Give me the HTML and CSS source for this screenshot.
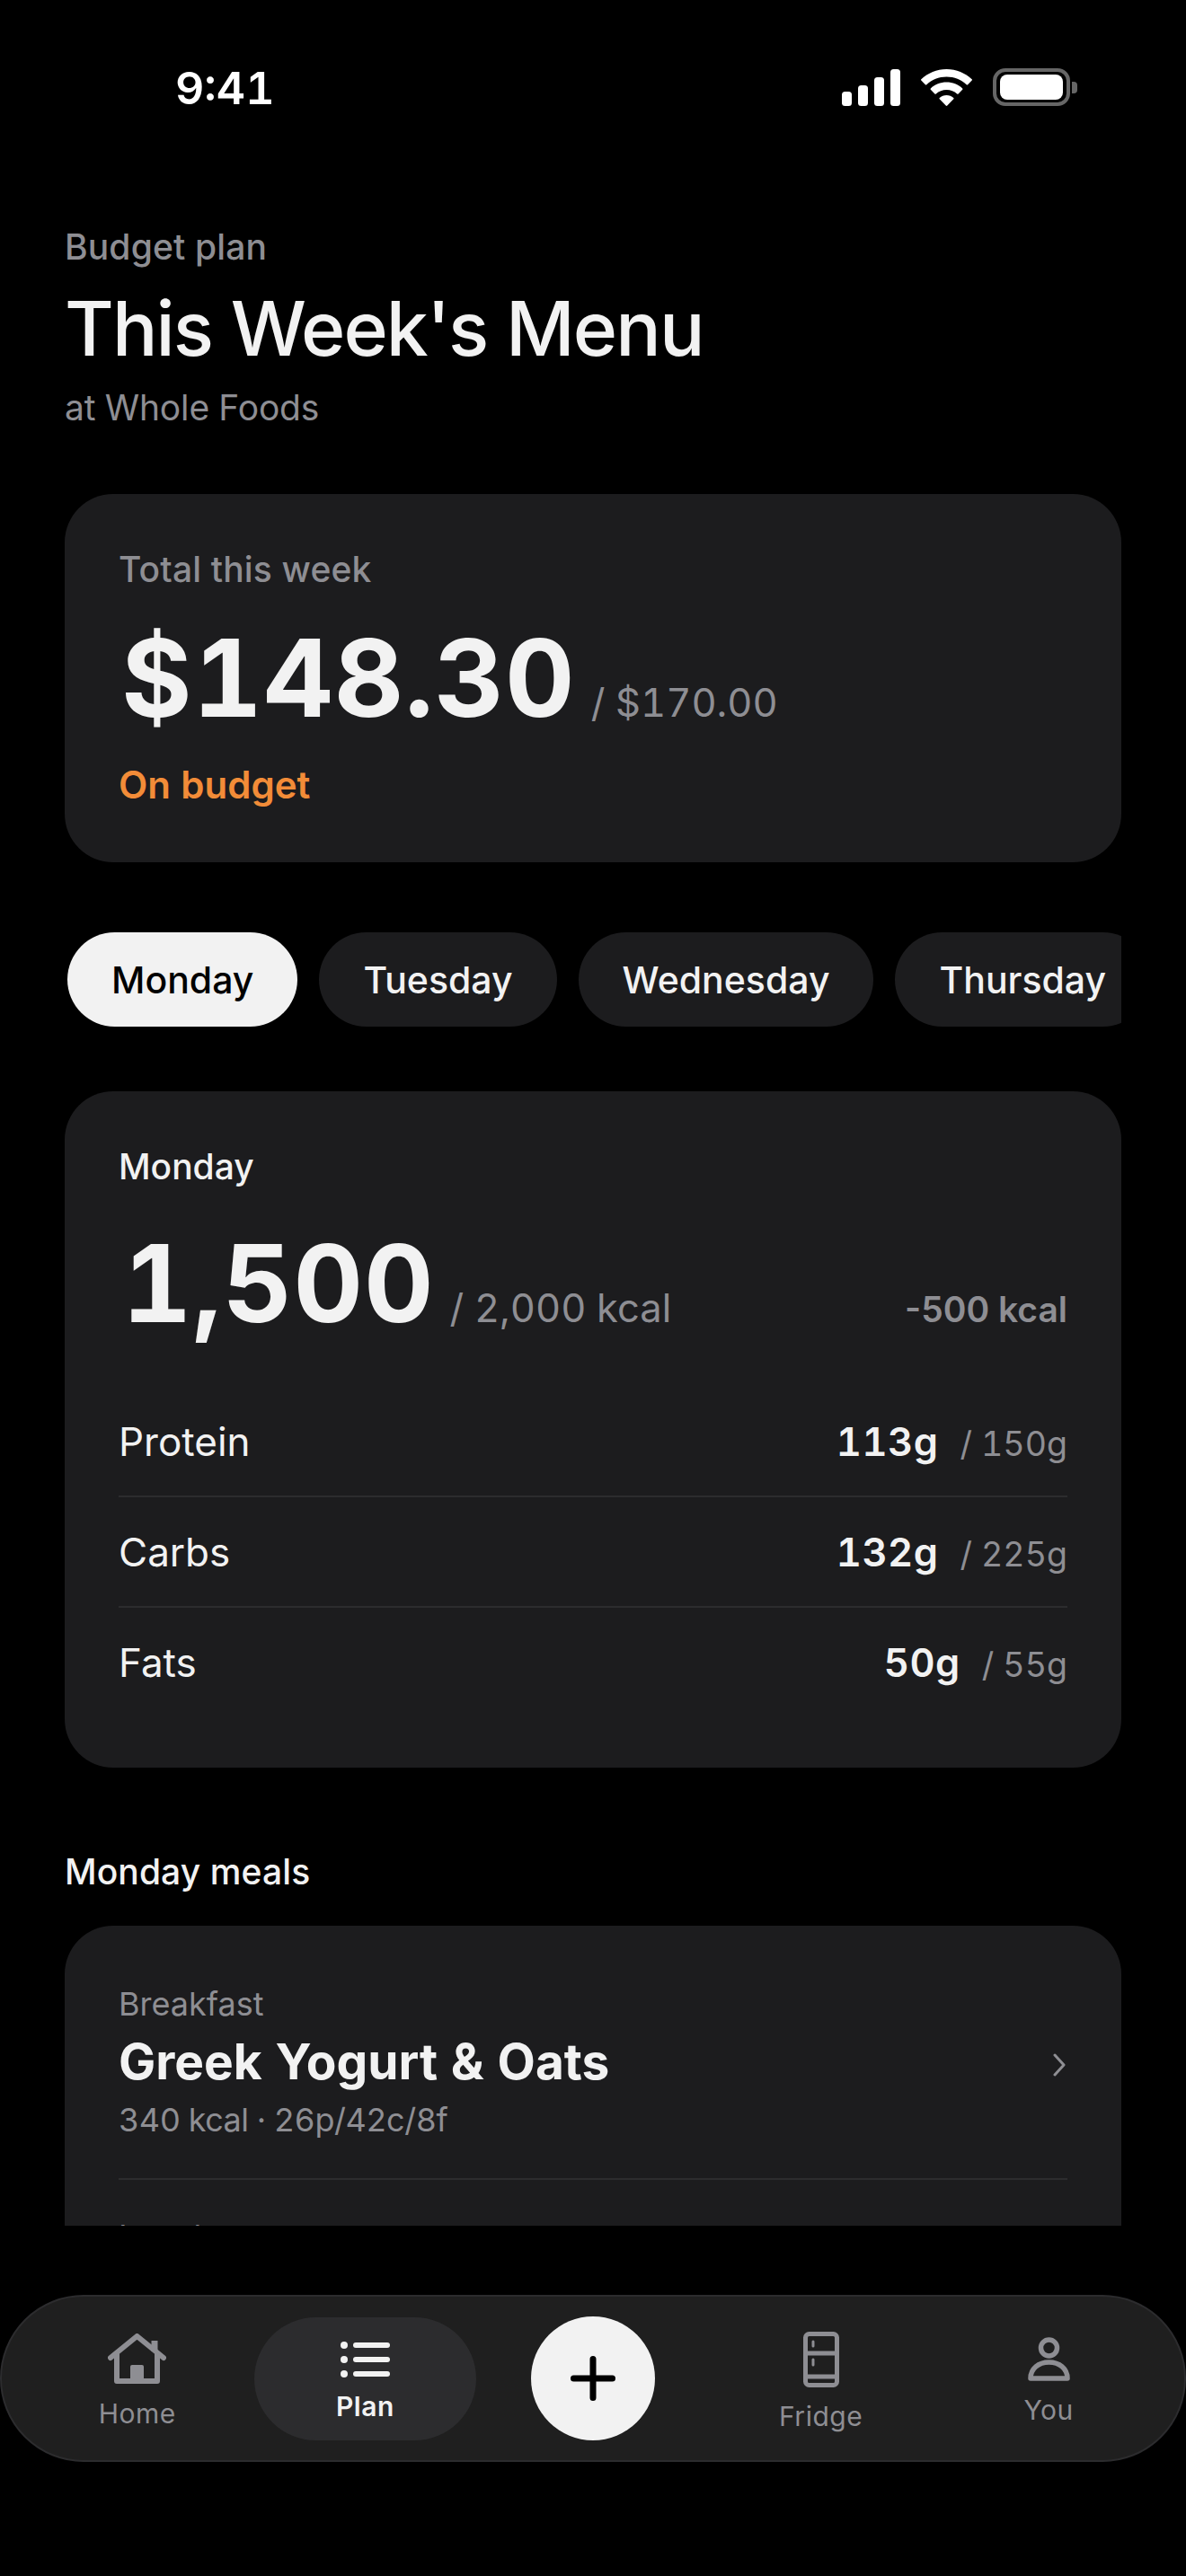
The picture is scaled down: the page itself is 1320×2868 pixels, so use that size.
FILE: index.html
```html
<!DOCTYPE html>
<html lang="en">
<head>
    <meta charset="UTF-8">
    <meta name="viewport" content="width=device-width, initial-scale=1.0">
    <title>This Week's Menu</title>
    <link rel="stylesheet" href="styles.css">
</head>
<body>
    <div class="phone">
        <div class="status-bar">
            <span class="time">9:41</span>
            <div class="status-icons">
                <svg class="icon-signal" width="65" height="41" viewBox="0 0 65 41" fill="#fff">
                    <rect x="0" y="25" width="11" height="16" rx="3.5"/>
                    <rect x="18" y="18" width="11" height="23" rx="3.5"/>
                    <rect x="36" y="9" width="11" height="32" rx="3.5"/>
                    <rect x="54" y="0" width="11" height="41" rx="3.5"/>
                </svg>
                <svg class="icon-wifi" width="57" height="41" viewBox="0 0 57 41" fill="#fff">
                    <path d="M28.5 0C17.6 0 7.7 4.3.3 11.3c-.4.4-.4 1 0 1.3l4.6 4.7c.4.4 1 .4 1.4 0C12.1 11.900 19.900 8.600 28.500 8.600s16.400 3.300 22.200 8.700c.4.4 1 .4 1.400 0l4.600-4.700c.4-.3.4-.9 0-1.300C49.300 4.300 39.400 0 28.500 0z"/>
                    <path d="M28.500 14.500c-6.800 0-13 2.600-17.700 6.900-.4.4-.4 1 0 1.400l4.600 4.600c.4.4 1 .4 1.400 0 3.100-2.700 7.200-4.400 11.700-4.400s8.600 1.700 11.700 4.400c.4.4 1 .4 1.400 0l4.600-4.600c.4-.4.4-1 0-1.400-4.700-4.300-10.900-6.900-17.700-6.900z"/>
                    <path d="M28.500 29c-3 0-5.700 1.100-7.800 2.900-.4.400-.4 1 0 1.400l7 7.300c.4.500 1.200.500 1.600 0l7-7.300c.4-.4.4-1 0-1.400-2.100-1.800-4.800-2.900-7.800-2.900z"/>
                </svg>
                <div class="battery">
                    <div class="battery-body"><div class="battery-level"></div></div>
                    <div class="battery-nub"></div>
                </div>
            </div>
        </div>

        <div class="scroll-area">
            <header class="header">
                <div class="eyebrow">Budget plan</div>
                <h1 class="title">This Week's Menu</h1>
                <div class="store">at Whole Foods</div>
            </header>

            <section class="card budget-card">
                <div class="card-label">Total this week</div>
                <div class="budget-row">
                    <span class="big-number">$148.30</span>
                    <span class="big-limit">/ $170.00</span>
                </div>
                <div class="budget-state">On budget</div>
            </section>

            <div class="day-tabs">
                <button class="day-tab active">Monday</button>
                <button class="day-tab">Tuesday</button>
                <button class="day-tab">Wednesday</button>
                <button class="day-tab">Thursday</button>
            </div>

            <section class="card day-card">
                <div class="day-name">Monday</div>
                <div class="kcal-row">
                    <span class="big-number kcal-number">1,500</span>
                    <span class="big-limit">/ 2,000 kcal</span>
                    <span class="kcal-diff">-500 kcal</span>
                </div>
                <div class="macro">
                    <span class="macro-name">Protein</span>
                    <span class="macro-value">113g</span>
                    <span class="macro-goal">/ 150g</span>
                </div>
                <div class="macro">
                    <span class="macro-name">Carbs</span>
                    <span class="macro-value">132g</span>
                    <span class="macro-goal">/ 225g</span>
                </div>
                <div class="macro">
                    <span class="macro-name">Fats</span>
                    <span class="macro-value">50g</span>
                    <span class="macro-goal">/ 55g</span>
                </div>
            </section>

            <h2 class="section-title">Monday meals</h2>

            <section class="card meals-card">
                <div class="meal">
                    <div class="meal-info">
                        <div class="meal-type">Breakfast</div>
                        <div class="meal-name">Greek Yogurt &amp; Oats</div>
                        <div class="meal-meta">340 kcal · 26p/42c/8f</div>
                    </div>
                    <svg class="chevron" width="14" height="26" viewBox="0 0 14 26" fill="none" stroke="#8e8e93" stroke-width="3" stroke-linecap="round" stroke-linejoin="round">
                        <path d="M2 2l10 11L2 24"/>
                    </svg>
                </div>
                <div class="meal">
                    <div class="meal-info">
                        <div class="meal-type">Lunch</div>
                        <div class="meal-name">Chicken Grain Bowl</div>
                        <div class="meal-meta">520 kcal · 42p/48c/16f</div>
                    </div>
                </div>
            </section>
        </div>

        <nav class="tab-bar">
            <a class="tab-item">
                <svg width="65" height="57" viewBox="0 0 65 57" fill="none" stroke="#8e8e93" stroke-width="6" stroke-linecap="round" stroke-linejoin="round">
                    <path d="M3 27L32.500 3 62 27"/>
                    <path d="M10 23v30h45V23"/>
                    <path d="M52 20V8" stroke-width="7" stroke-linecap="butt"/>
                    <rect x="25" y="35" width="15" height="18" rx="2" fill="#8e8e93" stroke="none"/>
                </svg>
                <span class="tab-label">Home</span>
            </a>
            <a class="tab-item current">
                <svg width="55" height="40" viewBox="0 0 55 40" fill="#f2f2f2">
                    <circle cx="4" cy="4" r="4"/>
                    <circle cx="4" cy="20" r="4"/>
                    <circle cx="4" cy="36" r="4"/>
                    <rect x="14" y="1" width="41" height="6" rx="3"/>
                    <rect x="14" y="17" width="41" height="6" rx="3"/>
                    <rect x="14" y="33" width="41" height="6" rx="3"/>
                </svg>
                <span class="tab-label">Plan</span>
            </a>
            <div class="tab-add">
                <button class="add-button">
                    <svg width="50" height="50" viewBox="0 0 50 50" fill="none" stroke="#000" stroke-width="7" stroke-linecap="round">
                        <path d="M25 3.500v43M3.500 25h43"/>
                    </svg>
                </button>
            </div>
            <a class="tab-item">
                <svg width="40" height="62" viewBox="0 0 40 62" fill="none" stroke="#8e8e93" stroke-width="5" stroke-linecap="round">
                    <rect x="2.500" y="2.500" width="35" height="57" rx="4"/>
                    <path d="M2.500 24h35M2.500 50h35" stroke-linecap="butt"/>
                    <path d="M11 11v5M11 31v6" stroke-width="3"/>
                </svg>
                <span class="tab-label">Fridge</span>
            </a>
            <a class="tab-item">
                <svg width="47" height="49" viewBox="0 0 47 49" fill="none" stroke="#8e8e93" stroke-width="5.500" stroke-linejoin="round">
                    <circle cx="23.500" cy="12" r="9"/>
                    <path d="M3 46c0-11 9-18 20.500-18S44 35 44 46z"/>
                </svg>
                <span class="tab-label">You</span>
            </a>
        </nav>
    </div>
</body>
</html>
```

FILE: styles.css
```css
* { box-sizing: border-box; }
html, body { margin: 0; padding: 0; background: #000; }
body { font-family: Inter, "Liberation Sans", sans-serif; font-variant-numeric: tabular-nums; color: #f2f2f2; }

.phone { width: 1320px; height: 2868px; background: #000; display: flex; flex-direction: column; overflow: hidden; }

/* status bar */
.status-bar { height: 195px; flex: none; display: flex; justify-content: space-between; align-items: flex-start; padding: 70px 121px 0 195px; }
.time { font-size: 50px; font-weight: 600; line-height: 56px; color: #fff; }
.status-icons { display: flex; align-items: center; gap: 23px; padding-top: 6px; }
.battery { display: flex; align-items: center; gap: 2px; }
.battery-body { width: 86px; height: 42px; border: 4px solid #666; border-radius: 14px; padding: 3px 4px; }
.battery-level { width: 100%; height: 100%; background: #fff; border-radius: 8px; }
.battery-nub { width: 6px; height: 13px; background: #666; border-radius: 0 4px 4px 0; }

/* scrolling content, cut off above the tab bar */
.scroll-area { height: 2283px; flex: none; padding: 56px 72px 0; overflow: hidden; }

.header { margin-bottom: 72px; }
.eyebrow { font-size: 39px; font-weight: 550; line-height: 48px; letter-spacing: 0.150px; color: #8e8e93; }
.title { margin: 17px 0 0; font-size: 84px; font-weight: 500; line-height: 100px; letter-spacing: -1.900px; color: #f2f2f2; }
.store { margin-top: 14px; font-size: 39px; line-height: 48px; letter-spacing: -0.150px; color: #8e8e93; }

.card { background: #1c1c1e; border-radius: 54px; }

.budget-card { height: 410px; padding: 60px 60px 0; }
.card-label { font-size: 39px; font-weight: 550; line-height: 48px; letter-spacing: 0.150px; color: #8e8e93; }
.budget-row { display: flex; align-items: baseline; gap: 17px; margin-top: 32px; padding-left: 3px; }
.big-number { font-size: 120px; font-weight: 650; line-height: 130px; letter-spacing: 1px; color: #f2f2f2; }
.big-limit { font-size: 43.500px; line-height: 56px; color: #8e8e93; }
.budget-state { margin-top: 28px; font-size: 42px; font-weight: 600; line-height: 52px; color: #f28c38; }

.day-tabs { display: flex; gap: 24px; margin-top: 78px; padding-left: 3px; overflow: hidden; }
.day-tab { flex: none; height: 105px; padding: 0 49px; border: none; border-radius: 52.500px; background: #1c1c1e; color: #f2f2f2; font-family: inherit; font-size: 41px; font-weight: 500; }
.day-tab.active { background: #f2f2f2; color: #000; }

.day-card { height: 753px; margin-top: 72px; padding: 60px 60px 0; }
.day-name { font-size: 39px; font-weight: 500; line-height: 48px; }
.kcal-row { display: flex; align-items: baseline; gap: 17px; margin-top: 41px; padding-left: 4px; margin-bottom: 50px; }
.kcal-diff { margin-left: auto; font-size: 39px; font-weight: 600; font-variant-numeric: normal; color: #8e8e93; }
.macro { display: flex; align-items: baseline; height: 123px; line-height: 122px; border-bottom: 2px solid #2c2c2e; }
.macro:last-child { border-bottom: none; }
.macro-name { font-size: 44px; margin-right: auto; }
.macro-value { font-size: 43.500px; font-weight: 600; letter-spacing: 0.500px; }
.macro-goal { margin-left: 24px; font-size: 37.500px; color: #8e8e93; }

.section-title { margin: 92px 0 0; font-size: 39px; font-weight: 500; line-height: 48px; letter-spacing: 0.100px; color: #f2f2f2; }

.meals-card { margin-top: 36px; padding: 24px 60px 0; }
.meal { display: flex; align-items: center; justify-content: space-between; padding: 41px 0 43px; border-bottom: 2px solid #2c2c2e; }
.meal:last-child { border-bottom: none; }
.chevron { margin: 6px 2px 0 0; }
.meal-type { font-size: 36px; line-height: 44px; color: #8e8e93; }
.meal-name { margin-top: 9px; font-size: 55px; font-weight: 700; line-height: 66px; }
.meal-meta { margin-top: 10px; font-size: 36px; line-height: 44px; letter-spacing: -0.500px; color: #8e8e93; }

/* bottom tab bar */
.tab-bar { height: 186px; flex: none; margin-top: 77px; display: grid; grid-template-columns: repeat(5, 1fr); gap: 6px; align-items: center; padding: 0 27px; background: #1f1f1f; border: 2px solid #2c2c2e; border-radius: 93px; }
.tab-item { height: 137px; display: flex; flex-direction: column; align-items: center; justify-content: center; gap: 14px; padding-top: 7px; border-radius: 68.500px; color: #8e8e93; }
.tab-item svg { display: block; }
.tab-item.current { background: #2c2c2e; color: #f2f2f2; }
.tab-label { font-size: 30px; line-height: 36px; letter-spacing: 0.500px; }
.tab-item.current .tab-label { font-weight: 600; }
.tab-add { display: flex; justify-content: center; }
.add-button { width: 138px; height: 138px; display: flex; align-items: center; justify-content: center; padding: 0; border: none; border-radius: 50%; background: #f2f2f2; }
```
